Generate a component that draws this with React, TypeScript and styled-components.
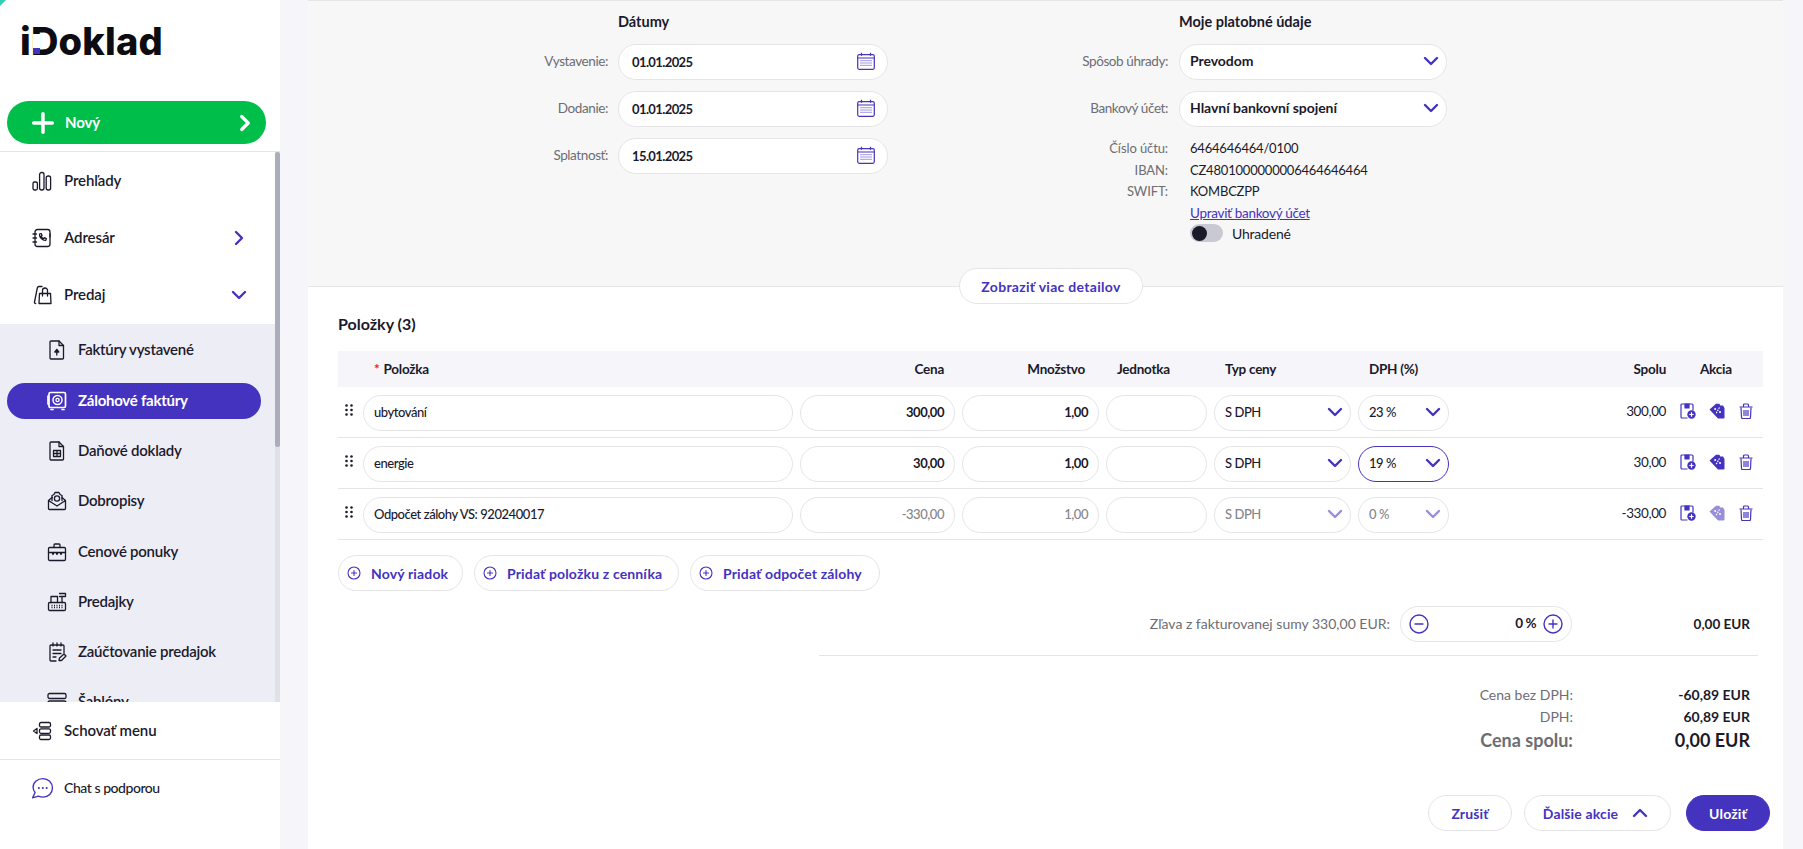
import React from "react";
import styled, { createGlobalStyle } from "styled-components";
import { ChevronDown, ChevronRight, ChevronUp, Plus } from "lucide-react";

const purple = "#4433bf";
const ink = "#1b1a2b";
const muted = "#6d6d74";
const line = "#e5e5e8";

const GlobalStyle = createGlobalStyle`
  html, body {
    margin: 0;
    height: 100%;
    overflow: hidden;
    background: #f5f5fa;
    font-family: "Lato", "Noto Sans", sans-serif;
    color: ${ink};
  }
  * { box-sizing: border-box; }
`;

const Page = styled.div`
  display: flex;
  height: 849px;
  overflow: hidden;
`;

const Sidebar = styled.aside`
  position: relative;
  width: 280px;
  flex: none;
  display: flex;
  flex-direction: column;
  background: #fff;
`;

const Corner = styled.span<{ $bottom?: boolean }>`
  position: absolute;
  left: 0;
  width: 0;
  height: 0;
  ${(p) =>
    p.$bottom
      ? `bottom: 0; border-bottom: 9px solid #1f1a5c; border-right: 9px solid transparent;`
      : `top: 0; border-top: 6px solid #2ecfb4; border-right: 6px solid transparent;`}
`;

const SidebarTop = styled.div`
  height: 152px;
  flex: none;
  padding: 101px 14px 0 7px;
  border-bottom: 1px solid ${line};
  position: relative;
`;

const Logo = styled.div`
  position: absolute;
  left: 20px;
  top: 18px;
  font-family: "Inter", sans-serif;
  font-size: 38px;
  line-height: 46px;
  font-weight: 800;
  letter-spacing: 0.2px;
  color: #0c0c12;
`;

// covers the stem of the D, the brand square sits at its foot
const LogoMark = styled.span`
  position: absolute;
  left: 13px;
  top: 16px;
  width: 7px;
  height: 20px;
  background: linear-gradient(#fff 14px, ${purple} 14px);
`;

const NewButton = styled.div`
  height: 43px;
  border-radius: 22px;
  background: #00be4a;
  color: #fff;
  display: flex;
  align-items: center;
  padding: 0 8px 0 20px;
  font-size: 15px;
  font-weight: 700;
  letter-spacing: -0.1px;
  svg:first-child { margin-right: 6px; }
  span { flex: 1; padding-bottom: 2px; }
`;

const NavList = styled.nav`
  flex: 1;
  min-height: 0;
  overflow: hidden;
`;

const ScrollTrack = styled.div`
  position: absolute;
  top: 152px;
  right: 0;
  width: 5px;
  height: 550px;
  background: #dfe1e7;
`;

const ScrollThumb = styled.div`
  height: 295px;
  background: #a9aeba;
  border-radius: 3px 3px 3px 3px;
`;

const NavRow = styled.div`
  height: 57.4px;
  display: flex;
  align-items: center;
  padding: 0 29px 0 32px;
  font-size: 15px;
  font-weight: 600;
  letter-spacing: -0.1px;
  gap: 12px;
  span { flex: 1; padding-bottom: 2px; }
`;

const SubMenu = styled.div`
  background: #ededf6;
  padding-top: 1px;
`;

const SubRow = styled.div<{ $active?: boolean }>`
  height: 50.3px;
  display: flex;
  align-items: center;
  font-size: 15px;
  font-weight: ${(p) => (p.$active ? 700 : 600)};
  letter-spacing: -0.25px;
  padding-left: 7px;
  ${(p) => p.$active && `color: #fff;`}
`;

const SubInner = styled.div<{ $active?: boolean }>`
  width: 254px;
  height: 36px;
  border-radius: 18px;
  display: flex;
  align-items: center;
  gap: 11px;
  padding-left: 40px;
  background: ${(p) => (p.$active ? purple : "transparent")};
  span { padding-bottom: 2px; }
`;

const SidebarFooter = styled.div`
  flex: none;
  height: 147px;
  background: #fff;
  z-index: 1;
`;

const FootRow = styled.div<{ $border?: boolean; $thin?: boolean }>`
  height: 57px;
  display: flex;
  align-items: center;
  gap: ${(p) => (p.$thin ? 10 : 12)}px;
  padding-left: ${(p) => (p.$thin ? 31 : 32)}px;
  font-size: ${(p) => (p.$thin ? 14 : 15)}px;
  font-weight: ${(p) => (p.$thin ? 500 : 600)};
  letter-spacing: ${(p) => (p.$thin ? -0.45 : -0.1)}px;
  ${(p) => p.$border && `border-bottom: 1px solid ${line}; height: 58px;`}
  span { padding-bottom: 2px; }
`;

const Icon = styled.svg<{ $size?: number }>`
  width: ${(p) => p.$size ?? 20}px;
  height: ${(p) => p.$size ?? 20}px;
  flex: none;
  fill: none;
  stroke: currentColor;
  stroke-width: 1.3;
  stroke-linecap: round;
  stroke-linejoin: round;
`;

const BarsIcon = () => (
  <Icon viewBox="0 0 20 20">
    <rect x="1" y="11" width="4.4" height="8" rx="1.5" />
    <rect x="7.6" y="1.5" width="4.4" height="17.5" rx="2" />
    <rect x="14.2" y="5" width="4.4" height="14" rx="2" />
  </Icon>
);
const BookIcon = () => (
  <Icon viewBox="0 0 20 20">
    <rect x="3" y="1.5" width="15" height="17" rx="2.5" />
    <path d="M1 6h3.5M1 10h3.5M1 14h3.5M18 6v3" />
    <path d="M7.5 6l1.6-.5 1 2-1 1c.5 1 1.2 1.7 2.2 2.2l1-1 2 1-.5 1.6c-3.2.4-6.6-2.8-6.3-6.3z" />
  </Icon>
);
const BagIcon = () => (
  <Icon viewBox="0 0 20 20">
    <path d="M7.5 8.500h11l.5 10H7z" />
    <path d="M10.500 11V5.500a2.500 2.500 0 0 1 5 0V11" />
    <path d="M10 1.500H7C6 1.500 5.500 2 5.300 3L2.500 17c-.2 1 .3 1.500 1.200 1.500" />
  </Icon>
);
const FileUpIcon = () => (
  <Icon viewBox="0 0 20 20">
    <path d="M4 1h8l4.500 4.500V18a1 1 0 0 1-1 1H4a1 1 0 0 1-1-1V2a1 1 0 0 1 1-1z" />
    <path d="M12 1v4.500h4.500M9.800 15V10" />
    <path d="M7.800 12l2-2.500 2 2.500z" fill="currentColor" />
  </Icon>
);
const SafeIcon = () => (
  <Icon viewBox="0 0 20 20">
    <rect x="2" y="1.500" width="16.500" height="15" rx="1.500" strokeWidth="1.700" />
    <circle cx="10.500" cy="9" r="4.500" strokeWidth="1.500" />
    <circle cx="10.500" cy="9" r="1.600" />
    <path d="M4 18.500h2M15 18.500h2M1 5v8" strokeWidth="1.700" />
  </Icon>
);
const FileTableIcon = () => (
  <Icon viewBox="0 0 20 20">
    <path d="M4 1h8l4.500 4.500V18a1 1 0 0 1-1 1H4a1 1 0 0 1-1-1V2a1 1 0 0 1 1-1z" />
    <path d="M12 1v4.500h4.500M6.500 9.500h7v6h-7zM6.500 12.500h7M10 9.500v6" />
  </Icon>
);
const EnvelopeIcon = () => (
  <Icon viewBox="0 0 20 20">
    <path d="M1.500 9.500V17.500a1 1 0 0 0 1 1h15a1 1 0 0 0 1-1V9.500l-3.500-3M1.500 9.500l3.500-3M1.500 9.500L10 15l8.500-5.500" />
    <circle cx="10" cy="7.500" r="2.600" />
    <path d="M5 9.500V4.500l2-1 1-2h4l1 2 2 1v5" />
  </Icon>
);
const CaseIcon = () => (
  <Icon viewBox="0 0 20 20">
    <rect x="1.500" y="5.500" width="17" height="13" rx="1.200" />
    <path d="M7 5.500V3a1 1 0 0 1 1-1h4a1 1 0 0 1 1 1v2.500M1.500 10.500h17M5 10.500l1 2 1-2M9 10.500l1 2 1-2M13 10.500l1 2 1-2" />
  </Icon>
);
const RegisterIcon = () => (
  <Icon viewBox="0 0 20 20">
    <rect x="1.500" y="10.500" width="17" height="8" rx="1.200" />
    <path d="M4 10.500V4.500h6.500v6M12.500 1.500h6v3h-6M15 4.500v6" />
    <path d="M4.500 13.500h11M4.500 15.500h11" strokeDasharray="1 1.500" strokeLinecap="butt" />
  </Icon>
);
const NoteIcon = () => (
  <Icon viewBox="0 0 20 20">
    <path d="M9 19H4a1 1 0 0 1-1-1V4a1 1 0 0 1 1-1h12a1 1 0 0 1 1 1v7" />
    <path d="M6 1v3M10 1v3M14 1v3M6 8h8M6 11.500h8M6 15h3M12 18.500l.5-2.500 4.500-4 2 2-4.500 4.500z" />
  </Icon>
);
const LayoutIcon = () => (
  <Icon viewBox="0 0 20 20">
    <rect x="1" y="1.500" width="18" height="5" rx="1.500" />
    <rect x="1" y="9" width="18" height="9" rx="1.500" />
  </Icon>
);
const MenuIcon = () => (
  <Icon viewBox="0 0 20 20">
    <rect x="7.500" y="1.500" width="11" height="4.500" rx="1.500" />
    <rect x="7.500" y="7.800" width="11" height="4.500" rx="1.500" />
    <rect x="7.500" y="14" width="11" height="4.500" rx="1.500" />
    <path d="M5 7.500L1.500 10 5 12.500z" />
  </Icon>
);
const ChatIcon = () => (
  <Icon viewBox="0 0 22 22" $size={23} style={{ color: purple }}>
    <path d="M11.500 1.500c-5.200 0-9.500 3.600-9.500 8.300 0 1.900.7 3.600 1.900 5L1.500 20l5.500-1.700c1.400.6 2.900.9 4.500.9 5.200 0 9-3.800 9-8.700s-4-9-9-9z" />
    <path d="M7.500 10.500h.01M11.300 10.500h.01M15 10.500h.01" strokeWidth="2" />
  </Icon>
);

const CalendarSvg = styled.svg`
  width: 18px;
  height: 18px;
  fill: none;
  stroke: ${purple};
  stroke-width: 1.200;
  flex: none;
  margin-right: 1px;
`;

const CalendarIcon = () => (
  <CalendarSvg viewBox="0 0 18 18">
    <rect x="0.700" y="2.700" width="16.600" height="14.600" rx="1.500" />
    <path d="M1 6h16M4.500 0.800v3M13.500 0.800v3" />
    <path d="M3.500 8.700h11M3.500 11h11M3.500 13.300h11" strokeDasharray="1 1" strokeWidth="1" />
  </CalendarSvg>
);

const Main = styled.main`
  flex: 1;
  min-width: 0;
  padding: 0 20px 0 28px;
`;

const Content = styled.div`
  height: 849px;
  background: #fff;
  overflow: hidden;
`;

const TopPanel = styled.section`
  position: relative;
  height: 287px;
  background: #f7f7f7;
  border-top: 1px solid ${line};
  border-bottom: 1px solid ${line};
  padding-top: 9px;
  display: grid;
  grid-template-columns: 580px 559px;
`;

const PanelColumn = styled.div`
  display: flex;
  flex-direction: column;
`;

const PanelHeading = styled.h3<{ $left: number }>`
  margin: 0 0 10px;
  padding-left: ${(p) => p.$left}px;
  font-size: 14.500px;
  line-height: 24px;
  font-weight: 700;
`;

const FieldRow = styled.div<{ $label: number; $gap: number }>`
  display: grid;
  grid-template-columns: ${(p) => p.$label}px 1fr;
  column-gap: ${(p) => p.$gap}px;
  align-items: center;
  margin-bottom: 11px;
`;

const FieldLabel = styled.label`
  text-align: right;
  color: ${muted};
  font-size: 13.500px;
  letter-spacing: -0.4px;
  padding-bottom: 3px;
`;

const Pill = styled.div<{ $focus?: boolean }>`
  height: 36px;
  border-radius: 18px;
  background: #fff;
  border: 1px solid ${(p) => (p.$focus ? purple : line)};
  display: flex;
  align-items: center;
  justify-content: space-between;
  padding: 0 11px 3px 10px;
  font-size: 13px;
  font-weight: 500;
  letter-spacing: -0.45px;
`;

const DateValue = styled.span`
  font-weight: 700;
  font-size: 13px;
  letter-spacing: -0.6px;
  margin-left: 3px;
  padding-top: 3px;
`;

const SelectValue = styled.span`
  font-weight: 700;
  font-size: 14px;
  letter-spacing: -0.05px;
`;

const Chevron = styled(ChevronDown)<{ $dim?: boolean }>`
  color: ${purple};
  flex: none;
  margin-right: -8px;
  opacity: ${(p) => (p.$dim ? 0.55 : 1)};
`;

const InfoRow = styled.div`
  display: grid;
  grid-template-columns: 280px 1fr;
  column-gap: 22px;
  height: 21.500px;
  line-height: 21px;
  font-size: 13px;
  letter-spacing: -0.2px;
`;

const InfoLabel = styled.span`
  text-align: right;
  color: ${muted};
  letter-spacing: -0.1px;
`;

const BankLink = styled.a`
  color: ${purple};
  text-decoration: underline;
  font-size: 13.500px;
  letter-spacing: -0.3px;
`;

const Toggle = styled.div`
  display: flex;
  align-items: center;
  gap: 9px;
  height: 18px;
  margin-left: 302px;
  font-size: 14px;
  letter-spacing: -0.2px;
`;

const ToggleTrack = styled.span`
  width: 33px;
  height: 18px;
  border-radius: 9px;
  background: #c9c9d3;
  padding: 1.500px;
  display: block;
  &::before {
    content: "";
    display: block;
    width: 15px;
    height: 15px;
    border-radius: 50%;
    background: ${ink};
  }
`;

const DetailButton = styled.button`
  position: absolute;
  left: 651px;
  bottom: -18px;
  width: 184px;
  height: 36px;
  border-radius: 18px;
  border: 1px solid ${line};
  background: #fff;
  color: ${purple};
  font: 700 14px "Lato", sans-serif;
  letter-spacing: 0.3px;
  z-index: 1;
`;

const Items = styled.section`
  padding: 24px 20px 0 30px;
`;

const ItemsTitle = styled.h2`
  margin: 0 0 15px;
  font-size: 16px;
  line-height: 25px;
  font-weight: 700;
`;

const columns = "18px 430px 155px 137px 101px 137px 91px 210px 1fr";

const HeadRow = styled.div`
  display: grid;
  grid-template-columns: ${columns};
  column-gap: 7px;
  height: 36px;
  align-items: center;
  background: #f5f5fa;
  font-size: 13.500px;
  font-weight: 700;
  letter-spacing: -0.25px;
`;

const HeadCell = styled.div<{ $align?: string; $pad?: number; $padRight?: number }>`
  text-align: ${(p) => p.$align ?? "left"};
  padding-left: ${(p) => p.$pad ?? 0}px;
  padding-right: ${(p) => p.$padRight ?? 0}px;
  white-space: nowrap;
`;

const Required = styled.span`
  color: #e8231e;
  margin-right: 4px;
`;

const ItemRow = styled.div`
  display: grid;
  grid-template-columns: ${columns};
  column-gap: 7px;
  height: 51px;
  padding-top: 8px;
  border-bottom: 1px solid ${line};
  &:last-of-type { height: 52px; }
`;

const Grip = styled.svg`
  width: 8px;
  height: 12px;
  margin: 9px 0 0 7px;
  fill: ${ink};
`;

const RowPill = styled(Pill)<{ $dim?: boolean; $right?: boolean }>`
  color: ${(p) => (p.$dim ? "#85858c" : ink)};
  justify-content: ${(p) => (p.$right ? "flex-end" : "space-between")};
  font-weight: ${(p) => (p.$right && !p.$dim ? 700 : 500)};
  ${(p) => p.$right && `padding-right: 10px;`}
`;

const Total = styled.div`
  text-align: right;
  font-size: 13.500px;
  letter-spacing: -0.4px;
  line-height: 33px;
`;

const Actions = styled.div`
  display: flex;
  align-items: center;
  height: 32px;
  gap: 13px;
  padding-left: 7px;
  color: ${purple};
`;

const ActionIcon = styled.svg<{ $dim?: boolean }>`
  width: 16px;
  height: 16px;
  fill: none;
  stroke: currentColor;
  stroke-width: 1.200;
  flex: none;
  opacity: ${(p) => (p.$dim ? 0.55 : 1)};
`;

const AddRow = styled.div`
  display: flex;
  gap: 11px;
  margin-top: 15px;
`;

const OutlineButton = styled.div<{ $gap?: number }>`
  height: 36px;
  border-radius: 18px;
  border: 1px solid ${line};
  background: #fff;
  color: ${purple};
  display: inline-flex;
  align-items: center;
  gap: ${(p) => p.$gap ?? 10}px;
  font-size: 14px;
  font-weight: 700;
  letter-spacing: 0.15px;
  white-space: nowrap;
`;

const AddButton = styled(OutlineButton)<{ $w: number }>`
  width: ${(p) => p.$w}px;
  padding-left: 8px;
`;

const DiscountRow = styled.div`
  display: grid;
  grid-template-columns: 1fr 172px 168px;
  column-gap: 10px;
  margin-top: 15px;
  align-items: center;
  padding-right: 13px;
  font-size: 14px;
`;

const DiscountLabel = styled.span`
  text-align: right;
  color: ${muted};
  padding-bottom: 2px;
`;

const DiscountField = styled(Pill)`
  padding: 0 8px;
  font-size: 13.500px;
  font-weight: 700;
`;

const Percent = styled.span`
  margin-left: auto;
  margin-right: 7px;
  padding-bottom: 2px;
`;

const Amount = styled.span`
  text-align: right;
  font-weight: 700;
  font-size: 13.500px;
`;

const Rule = styled.hr`
  border: 0;
  border-top: 1px solid ${line};
  margin: 13px 5px 27px 481px;
`;

const SummaryRow = styled.div<{ $big?: boolean }>`
  display: grid;
  grid-template-columns: 1fr 177px;
  height: ${(p) => (p.$big ? 25 : 22)}px;
  align-items: center;
  padding-right: 13px;
  font-size: ${(p) => (p.$big ? 18 : 14)}px;
`;

const SummaryLabel = styled.span<{ $big?: boolean }>`
  text-align: right;
  color: ${muted};
  font-weight: ${(p) => (p.$big ? 700 : 400)};
`;

const SummaryValue = styled.span`
  text-align: right;
  font-weight: 700;
`;

const Footer = styled.div`
  display: flex;
  justify-content: flex-end;
  gap: 12px;
  margin: 43px -7px 0 0;
`;

const FooterButton = styled(OutlineButton)<{ $w: number }>`
  width: ${(p) => p.$w}px;
  justify-content: center;
`;

const SaveButton = styled(FooterButton)`
  background: ${purple};
  border-color: ${purple};
  color: #fff;
  margin-left: 3px;
`;

const GripIcon = () => (
  <Grip viewBox="0 0 8 12">
    <circle cx="1.500" cy="1.500" r="1.300" />
    <circle cx="6.500" cy="1.500" r="1.300" />
    <circle cx="1.500" cy="6" r="1.300" />
    <circle cx="6.500" cy="6" r="1.300" />
    <circle cx="1.500" cy="10.500" r="1.300" />
    <circle cx="6.500" cy="10.500" r="1.300" />
  </Grip>
);

const BoxPlus = () => (
  <ActionIcon viewBox="0 0 16 16">
    <path d="M7.500 15H2a1 1 0 0 1-1-1V2a1 1 0 0 1 1-1h10a1 1 0 0 1 1 1v5.500" />
    <path d="M5 1h4v4H5z" fill="currentColor" />
    <circle cx="11.500" cy="11.500" r="4.200" fill="currentColor" stroke="none" />
    <path d="M11.500 9.300v4.400M9.300 11.500h4.400" stroke="#fff" />
  </ActionIcon>
);

const TagIcon = ({ dim }: { dim?: boolean }) => (
  <ActionIcon viewBox="0 0 16 16" $dim={dim}>
    <path d="M.5 6.500L7 .8h3.300l1 1.700h2.700L15.500 5v9.500a1 1 0 0 1-1 1H9z" fill="currentColor" stroke="none" />
    <path d="M10.500 4.500l-3.500 6" stroke="#fff" strokeDasharray="1.500 1" />
    <circle cx="6.200" cy="6" r="1" fill="#fff" stroke="none" />
    <circle cx="11" cy="9" r="1" fill="#fff" stroke="none" />
  </ActionIcon>
);

const TrashIcon = () => (
  <ActionIcon viewBox="0 0 16 16">
    <path d="M1.500 4h13M5.500 4V2a1 1 0 0 1 1-1h3a1 1 0 0 1 1 1v2" />
    <path d="M3 4.500l.5 10a1 1 0 0 0 1 1h7a1 1 0 0 0 1-1l.5-10" />
    <path d="M6 7v6M8 7v6M10 7v6" />
  </ActionIcon>
);

const PlusCircle = () => (
  <Icon viewBox="0 0 14 14" $size={14} style={{ color: purple, strokeWidth: 1.1 }}>
    <circle cx="7" cy="7" r="6" />
    <path d="M7 4.500v5M4.500 7h5" />
  </Icon>
);

const RoundIcon = ({ minus }: { minus?: boolean }) => (
  <Icon viewBox="0 0 20 20" $size={20} style={{ color: purple, strokeWidth: 1.4 }}>
    <circle cx="10" cy="10" r="9" />
    <path d={minus ? "M6 10h8" : "M10 6v8M6 10h8"} />
  </Icon>
);

const subItems = [
  { label: "Faktúry vystavené", icon: <FileUpIcon /> },
  { label: "Zálohové faktúry", icon: <SafeIcon />, active: true },
  { label: "Daňové doklady", icon: <FileTableIcon /> },
  { label: "Dobropisy", icon: <EnvelopeIcon /> },
  { label: "Cenové ponuky", icon: <CaseIcon /> },
  { label: "Predajky", icon: <RegisterIcon /> },
  { label: "Zaúčtovanie predajok", icon: <NoteIcon /> },
  { label: "Šablóny", icon: <LayoutIcon /> },
];

const rows = [
  { name: "ubytování", price: "300,00", qty: "1,00", vat: "23 %", total: "300,00" },
  { name: "energie", price: "30,00", qty: "1,00", vat: "19 %", total: "30,00", focus: true },
  { name: "Odpočet zálohy VS: 920240017", price: "-330,00", qty: "1,00", vat: "0 %", total: "-330,00", dim: true },
];

export default function App() {
  return (
    <Page>
      <GlobalStyle />
      <Sidebar>
        <Corner />
        <SidebarTop>
          <Logo>
            iDoklad
            <LogoMark />
          </Logo>
          <NewButton>
            <Plus size={32} strokeWidth={2.600} />
            <span>Nový</span>
            <ChevronRight size={26} strokeWidth={3} />
          </NewButton>
        </SidebarTop>
        <NavList>
          <NavRow>
            <BarsIcon />
            <span>Prehľady</span>
          </NavRow>
          <NavRow>
            <BookIcon />
            <span>Adresár</span>
            <ChevronRight size={24} strokeWidth={2.400} color={purple} />
          </NavRow>
          <NavRow>
            <BagIcon />
            <span>Predaj</span>
            <ChevronDown size={24} strokeWidth={2.400} color={purple} />
          </NavRow>
          <SubMenu>
            {subItems.map((item) => (
              <SubRow key={item.label} $active={item.active}>
                <SubInner $active={item.active}>
                  {item.icon}
                  <span>{item.label}</span>
                </SubInner>
              </SubRow>
            ))}
          </SubMenu>
        </NavList>
        <ScrollTrack>
          <ScrollThumb />
        </ScrollTrack>
        <SidebarFooter>
          <FootRow $border>
            <MenuIcon />
            <span>Schovať menu</span>
          </FootRow>
          <FootRow $thin>
            <ChatIcon />
            <span>Chat s podporou</span>
          </FootRow>
        </SidebarFooter>
        <Corner $bottom />
      </Sidebar>
      <Main>
        <Content>
          <TopPanel>
            <PanelColumn>
              <PanelHeading $left={310}>Dátumy</PanelHeading>
              {[
                ["Vystavenie:", "01.01.2025"],
                ["Dodanie:", "01.01.2025"],
                ["Splatnosť:", "15.01.2025"],
              ].map(([label, value]) => (
                <FieldRow key={label} $label={300} $gap={10}>
                  <FieldLabel>{label}</FieldLabel>
                  <Pill>
                    <DateValue>{value}</DateValue>
                    <CalendarIcon />
                  </Pill>
                </FieldRow>
              ))}
            </PanelColumn>
            <PanelColumn>
              <PanelHeading $left={291}>Moje platobné údaje</PanelHeading>
              {[
                ["Spôsob úhrady:", "Prevodom"],
                ["Bankový účet:", "Hlavní bankovní spojení"],
              ].map(([label, value]) => (
                <FieldRow key={label} $label={280} $gap={11}>
                  <FieldLabel>{label}</FieldLabel>
                  <Pill>
                    <SelectValue>{value}</SelectValue>
                    <Chevron size={24} strokeWidth={2.400} />
                  </Pill>
                </FieldRow>
              ))}
              <InfoRow>
                <InfoLabel>Číslo účtu:</InfoLabel>
                <span>6464646464/0100</span>
              </InfoRow>
              <InfoRow>
                <InfoLabel>IBAN:</InfoLabel>
                <span>CZ4801000000006464646464</span>
              </InfoRow>
              <InfoRow>
                <InfoLabel>SWIFT:</InfoLabel>
                <span>KOMBCZPP</span>
              </InfoRow>
              <InfoRow>
                <span />
                <BankLink>Upraviť bankový účet</BankLink>
              </InfoRow>
              <Toggle>
                <ToggleTrack />
                Uhradené
              </Toggle>
            </PanelColumn>
            <DetailButton>Zobraziť viac detailov</DetailButton>
          </TopPanel>
          <Items>
            <ItemsTitle>Položky (3)</ItemsTitle>
            <HeadRow>
              <span />
              <HeadCell $pad={11}>
                <Required>*</Required>Položka
              </HeadCell>
              <HeadCell $align="right" $padRight={11}>Cena</HeadCell>
              <HeadCell $align="right" $padRight={14}>Množstvo</HeadCell>
              <HeadCell $pad={11}>Jednotka</HeadCell>
              <HeadCell $pad={11}>Typ ceny</HeadCell>
              <HeadCell $pad={11}>DPH (%)</HeadCell>
              <HeadCell $align="right">Spolu</HeadCell>
              <HeadCell $pad={27}>Akcia</HeadCell>
            </HeadRow>
            {rows.map((row) => (
              <ItemRow key={row.name}>
                <GripIcon />
                <RowPill>{row.name}</RowPill>
                <RowPill $right $dim={row.dim}>{row.price}</RowPill>
                <RowPill $right $dim={row.dim}>{row.qty}</RowPill>
                <RowPill />
                <RowPill $dim={row.dim}>
                  S DPH
                  <Chevron size={24} strokeWidth={2.400} $dim={row.dim} />
                </RowPill>
                <RowPill $dim={row.dim} $focus={row.focus}>
                  {row.vat}
                  <Chevron size={24} strokeWidth={2.400} $dim={row.dim} />
                </RowPill>
                <Total>{row.total}</Total>
                <Actions>
                  <BoxPlus />
                  <TagIcon dim={row.dim} />
                  <TrashIcon />
                </Actions>
              </ItemRow>
            ))}
            <AddRow>
              <AddButton $w={125}>
                <PlusCircle />
                Nový riadok
              </AddButton>
              <AddButton $w={205}>
                <PlusCircle />
                Pridať položku z cenníka
              </AddButton>
              <AddButton $w={190}>
                <PlusCircle />
                Pridať odpočet zálohy
              </AddButton>
            </AddRow>
            <DiscountRow>
              <DiscountLabel>Zľava z fakturovanej sumy 330,00 EUR:</DiscountLabel>
              <DiscountField>
                <RoundIcon minus />
                <Percent>0 %</Percent>
                <RoundIcon />
              </DiscountField>
              <Amount>0,00 EUR</Amount>
            </DiscountRow>
            <Rule />
            <SummaryRow>
              <SummaryLabel>Cena bez DPH:</SummaryLabel>
              <SummaryValue>-60,89 EUR</SummaryValue>
            </SummaryRow>
            <SummaryRow>
              <SummaryLabel>DPH:</SummaryLabel>
              <SummaryValue>60,89 EUR</SummaryValue>
            </SummaryRow>
            <SummaryRow $big>
              <SummaryLabel $big>Cena spolu:</SummaryLabel>
              <SummaryValue>0,00 EUR</SummaryValue>
            </SummaryRow>
            <Footer>
              <FooterButton $w={84}>Zrušiť</FooterButton>
              <FooterButton $w={147} $gap={10}>
                Ďalšie akcie
                <ChevronUp size={24} strokeWidth={2.400} />
              </FooterButton>
              <SaveButton $w={84}>Uložiť</SaveButton>
            </Footer>
          </Items>
        </Content>
      </Main>
    </Page>
  );
}
